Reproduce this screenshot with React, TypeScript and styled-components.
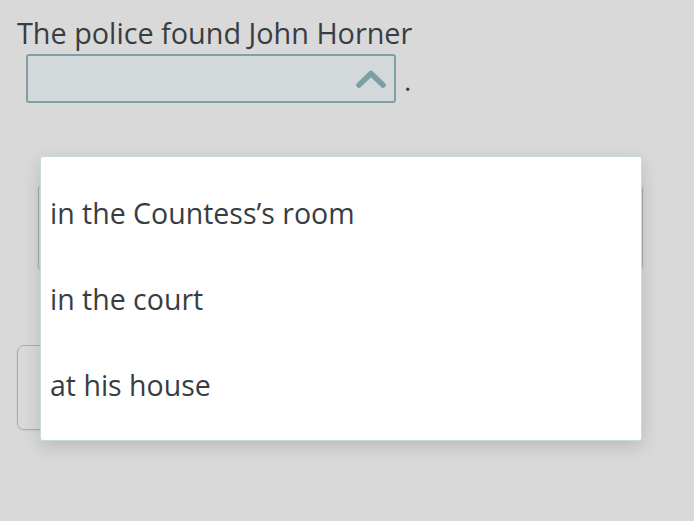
import React from 'react';
import styled, { createGlobalStyle } from 'styled-components';

const GlobalStyle = createGlobalStyle`
  html, body {
    margin: 0;
    padding: 0;
    background: #d9d9d9;
  }
  body {
    font-family: 'Open Sans', 'Noto Sans', sans-serif;
    color: #383d42;
  }
`;

const Page = styled.div`
  position: relative;
  width: 694px;
  height: 521px;
  overflow: hidden;
  background: #d9d9d9;
  padding-top: 15px;
  box-sizing: border-box;
`;

const Sentence = styled.p`
  margin: 0 0 0 17px;
  font-size: 28.8px;
  line-height: 36px;
`;

const SelectRow = styled.div`
  display: flex;
  align-items: flex-end;
  margin: 3px 0 0 26px;
`;

const SelectBox = styled.div`
  box-sizing: border-box;
  width: 370px;
  height: 49px;
  border: 2px solid #7f9fa2;
  border-radius: 3px;
  background: #d3d9db;
  display: flex;
  align-items: center;
  justify-content: flex-end;
  padding-right: 8px;
`;

const Period = styled.span`
  font-size: 28px;
  line-height: 28px;
  margin: 0 0 9px 8px;
`;

const AnswerBox = styled.div<{ $left: number; $top: number; $radius: number }>`
  box-sizing: border-box;
  width: 605px;
  height: 85px;
  margin: ${(p) => p.$top}px 0 0 ${(p) => p.$left}px;
  border: 1.5px solid #a9aeb0;
  border-radius: ${(p) => p.$radius}px;
  box-shadow: 0 1px 3px rgba(0, 0, 0, 0.08);
`;

const Dropdown = styled.ul`
  position: absolute;
  left: 40px;
  top: 156px;
  box-sizing: border-box;
  width: 602px;
  height: 285px;
  margin: 0;
  padding: 13px 0 12px;
  list-style: none;
  background: #ffffff;
  border: 1.5px solid #c5ddd9;
  border-radius: 3px;
  box-shadow: 0 6px 18px rgba(0, 0, 0, 0.14);
`;

const Option = styled.li`
  height: 86px;
  display: flex;
  align-items: center;
  padding-left: 9px;
  font-size: 28.5px;
  color: #383d42;
`;

const Chevron = () => (
  <svg width="30" height="22" viewBox="0 0 30 22">
    <polyline
      points="3,17 15,5.5 27,17"
      fill="none"
      stroke="#7ba0a3"
      strokeWidth="5.5"
      strokeLinecap="round"
      strokeLinejoin="round"
    />
  </svg>
);

const options = ['in the Countess’s room', 'in the court', 'at his house'];

export default function App() {
  return (
    <Page>
      <GlobalStyle />
      <Sentence>The police found John Horner</Sentence>
      <SelectRow>
        <SelectBox>
          <Chevron />
        </SelectBox>
        <Period>.</Period>
      </SelectRow>
      <AnswerBox $left={38} $top={82} $radius={4} />
      <AnswerBox $left={17} $top={75} $radius={7} />
      <Dropdown>
        {options.map((o) => (
          <Option key={o}>{o}</Option>
        ))}
      </Dropdown>
    </Page>
  );
}
